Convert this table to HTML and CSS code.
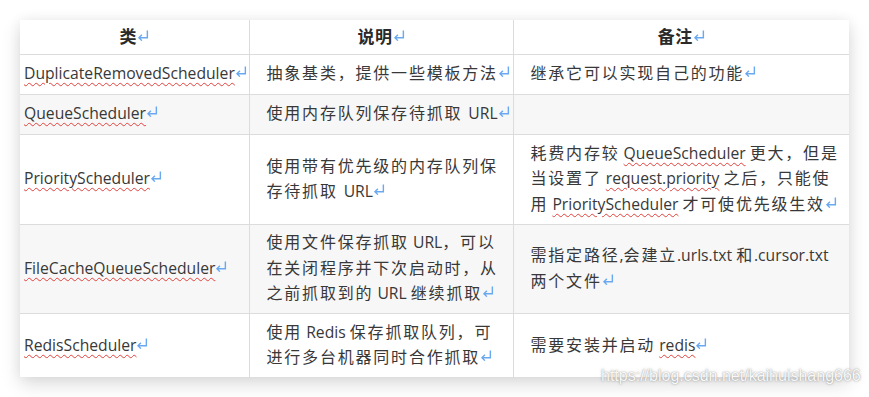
FILE: index.html
```html
<!DOCTYPE html>
<html lang="zh-CN">
<head>
<meta charset="utf-8">
<title>Scheduler</title>
<link rel="stylesheet" href="styles.css">
</head>
<body>
<div class="page">
  <table class="grid">
    <colgroup>
      <col class="c1">
      <col class="c2">
      <col class="c3">
    </colgroup>
    <thead>
      <tr class="h-head">
        <th>类<svg class="ret" viewBox="0 0 11 10"><path d="M9.5 0.5V7H2M4.5 4.3L1.8 7L4.5 9.7"/></svg></th>
        <th>说明<svg class="ret" viewBox="0 0 11 10"><path d="M9.5 0.5V7H2M4.5 4.3L1.8 7L4.5 9.7"/></svg></th>
        <th>备注<svg class="ret" viewBox="0 0 11 10"><path d="M9.5 0.5V7H2M4.5 4.3L1.8 7L4.5 9.7"/></svg></th>
      </tr>
    </thead>
    <tbody>
      <tr class="h-40">
        <td class="name"><span class="sp">DuplicateRemovedScheduler</span><svg class="ret" viewBox="0 0 11 10"><path d="M9.5 0.5V7H2M4.5 4.3L1.8 7L4.5 9.7"/></svg></td>
        <td>抽象基类，提供一些模板方法<svg class="ret" viewBox="0 0 11 10"><path d="M9.5 0.5V7H2M4.5 4.3L1.8 7L4.5 9.7"/></svg></td>
        <td>继承它可以实现自己的功能<svg class="ret" viewBox="0 0 11 10"><path d="M9.5 0.5V7H2M4.5 4.3L1.8 7L4.5 9.7"/></svg></td>
      </tr>
      <tr class="h-40 alt">
        <td class="name"><span class="sp">QueueScheduler</span><svg class="ret" viewBox="0 0 11 10"><path d="M9.5 0.5V7H2M4.5 4.3L1.8 7L4.5 9.7"/></svg></td>
        <td>使用内存队列保存待抓取 <span class="en">URL</span><svg class="ret" viewBox="0 0 11 10"><path d="M9.5 0.5V7H2M4.5 4.3L1.8 7L4.5 9.7"/></svg></td>
        <td></td>
      </tr>
      <tr class="h-90">
        <td class="name"><span class="sp">PriorityScheduler</span><svg class="ret" viewBox="0 0 11 10"><path d="M9.5 0.5V7H2M4.5 4.3L1.8 7L4.5 9.7"/></svg></td>
        <td>使用带有优先级的内存队列保<br>存待抓取 <span class="en">URL</span><svg class="ret" viewBox="0 0 11 10"><path d="M9.5 0.5V7H2M4.5 4.3L1.8 7L4.5 9.7"/></svg></td>
        <td>耗费内存较<span class="gap"> </span><span class="en sp">QueueScheduler</span><span class="gap"> </span>更大，但是<br>当设置了<span class="gap"> </span><span class="en sp">request.priority</span><span class="gap"> </span>之后，只能使<br>用<span class="gap"> </span><span class="en sp">PriorityScheduler</span><span class="gap"> </span>才可使优先级生效<svg class="ret" viewBox="0 0 11 10"><path d="M9.5 0.5V7H2M4.5 4.3L1.8 7L4.5 9.7"/></svg></td>
      </tr>
      <tr class="h-89 alt">
        <td class="name"><span class="sp">FileCacheQueueScheduler</span><svg class="ret" viewBox="0 0 11 10"><path d="M9.5 0.5V7H2M4.5 4.3L1.8 7L4.5 9.7"/></svg></td>
        <td>使用文件保存抓取<span class="gap"> </span><span class="en">URL</span>，可以<br>在关闭程序并下次启动时，从<br>之前抓取到的<span class="gap"> </span><span class="en">URL</span><span class="gap"> </span>继续抓取<svg class="ret" viewBox="0 0 11 10"><path d="M9.5 0.5V7H2M4.5 4.3L1.8 7L4.5 9.7"/></svg></td>
        <td>需指定路径<span class="en">,</span>会建立<span class="en">.urls.txt</span><span class="gap"> </span>和<span class="en">.cursor.txt</span><br>两个文件<svg class="ret" viewBox="0 0 11 10"><path d="M9.5 0.5V7H2M4.5 4.3L1.8 7L4.5 9.7"/></svg></td>
      </tr>
      <tr class="h-64">
        <td class="name"><span class="sp">RedisScheduler</span><svg class="ret" viewBox="0 0 11 10"><path d="M9.5 0.5V7H2M4.5 4.3L1.8 7L4.5 9.7"/></svg></td>
        <td>使用<span class="gap"> </span><span class="en">Redis</span><span class="gap"> </span>保存抓取队列，可<br>进行多台机器同时合作抓取<svg class="ret" viewBox="0 0 11 10"><path d="M9.5 0.5V7H2M4.5 4.3L1.8 7L4.5 9.7"/></svg></td>
        <td>需要安装并启动<span class="gap"> </span><span class="en sp">redis</span><svg class="ret" viewBox="0 0 11 10"><path d="M9.5 0.5V7H2M4.5 4.3L1.8 7L4.5 9.7"/></svg></td>
      </tr>
    </tbody>
  </table>
  <div class="watermark">https://blog.csdn.net/kaihuishang666</div>
</div>
</body>
</html>
```

FILE: styles.css
```css
html, body {
  margin: 0;
  padding: 0;
  background: #ffffff;
}

.page {
  position: relative;
  width: 869px;
  height: 397px;
  padding: 20px;
  box-sizing: border-box;
  overflow: hidden;
}

.grid {
  width: 829px;
  table-layout: fixed;
  border-collapse: collapse;
  background: #ffffff;
  box-shadow: 0 7px 18px rgba(0, 0, 0, 0.14), 0 0 12px rgba(0, 0, 0, 0.05);
  font-family: "Open Sans", "Noto Sans CJK SC", sans-serif;
  font-size: 16px;
  line-height: 25.5px;
  color: #383838;
}

.c1 { width: 229px; }
.c2 { width: 264px; }
.c3 { width: 336px; }

.grid th,
.grid td {
  border: 1px solid #dcdcdc;
  padding: 0 16px 0 17px;
  vertical-align: middle;
  text-align: left;
  letter-spacing: 1.8px;
  white-space: nowrap;
}

.grid tr:first-child th { border-top: none; }
.grid tr:last-child td { border-bottom: none; }
.grid th:first-child,
.grid td:first-child { border-left: none; }
.grid th:last-child,
.grid td:last-child { border-right: none; }

.grid th {
  text-align: center;
  font-size: 17px;
  font-weight: bold;
  color: #2a2a2a;
  letter-spacing: 0.5px;
  padding: 0;
}

.grid td.name {
  padding-left: 4px;
  padding-right: 2px;
  font-size: 15.7px;
  letter-spacing: 0;
}

.h-head { height: 34px; }
.h-40 { height: 40px; }
.h-90 { height: 90px; }
.h-89 { height: 89px; }
.h-64 { height: 64px; }

.alt td { background: #f7f7f7; }

.en {
  font-size: 15.7px;
  letter-spacing: 0;
}

.gap {
  letter-spacing: 0;
  font-size: 15.7px;
}

.sp {
  text-decoration-line: underline;
  text-decoration-style: wavy;
  text-decoration-color: #e0413c;
  text-decoration-thickness: 1px;
  text-underline-offset: 3px;
}

.ret {
  width: 12px;
  height: 11px;
  vertical-align: 2px;
  fill: none;
  stroke: #6aa9f0;
  stroke-width: 1.3;
}

.watermark {
  position: absolute;
  left: 601px;
  top: 367px;
  font-family: "Liberation Sans", Arial, sans-serif;
  font-size: 16px;
  line-height: 18px;
  color: rgba(255, 255, 255, 0.95);
  text-shadow: 0 0 1px rgba(90, 90, 90, 0.55), 0 0 3px rgba(120, 120, 120, 0.45);
  white-space: nowrap;
}
```
